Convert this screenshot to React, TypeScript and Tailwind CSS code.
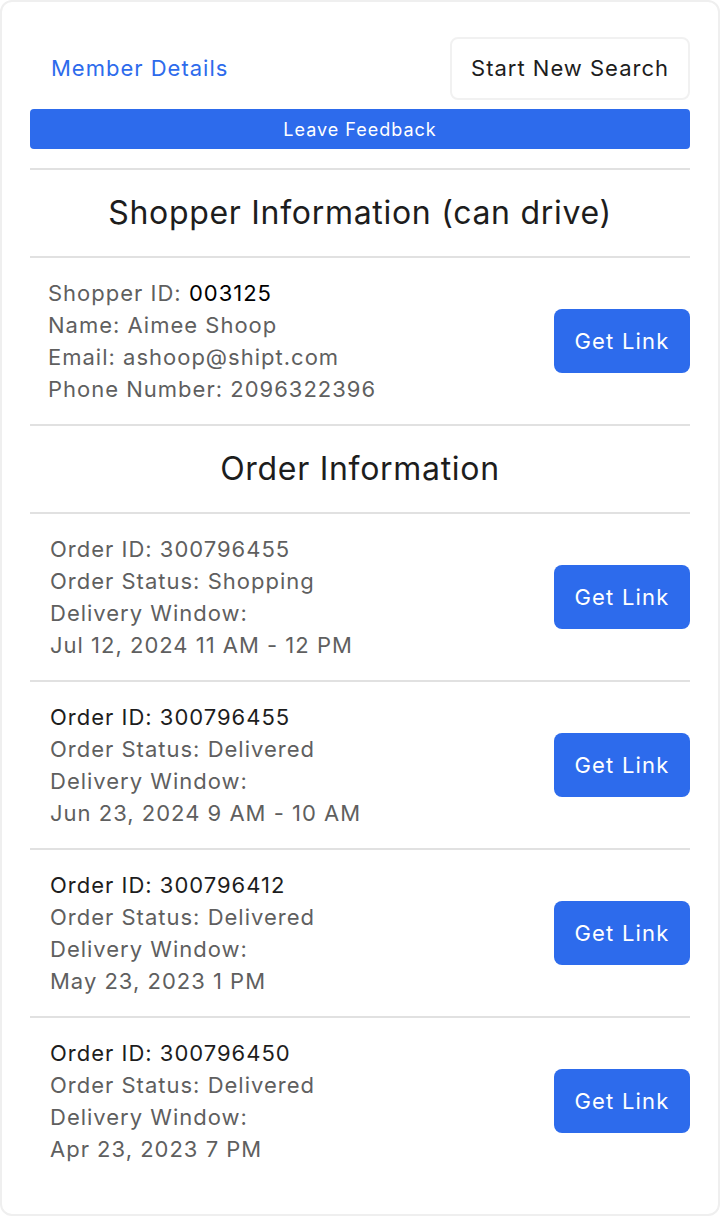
import React from 'react';

type Order = {
  id: string;
  status: string;
  window: string;
  active?: boolean;
};

const orders: Order[] = [
  { id: '300796455', status: 'Shopping', window: 'Jul 12, 2024 11 AM - 12 PM', active: true },
  { id: '300796455', status: 'Delivered', window: 'Jun 23, 2024 9 AM - 10 AM' },
  { id: '300796412', status: 'Delivered', window: 'May 23, 2023 1 PM' },
  { id: '300796450', status: 'Delivered', window: 'Apr 23, 2023 7 PM' },
];

const GetLink = () => (
  <button className="w-[136px] h-[64px] rounded-lg bg-[#2d6bec] text-white text-[22px] tracking-[1.2px] shrink-0">
    Get Link
  </button>
);

const Divider = () => <div className="h-[2px] bg-[#e1e1e1]" />;

const App: React.FC = () => {
  return (
    <div className="w-[720px] h-[1216px] bg-white font-['Inter',sans-serif] tracking-[1px]">
      <div className="h-full rounded-xl border-2 border-[#efefef] px-[28px] pt-[35px]">
        {/* Header */}
        <div className="flex justify-between items-center">
          <span className="ml-[21px] text-[22px] text-[#2d6bec]">Member Details</span>
          <button className="h-[63px] px-[19px] rounded-lg border-2 border-[#f1f1f1] text-[22px] text-[#1d1d1d]">
            Start New Search
          </button>
        </div>
        <button className="mt-[9px] w-full h-[40px] rounded bg-[#2d6bec] text-white text-[18px]">
          Leave Feedback
        </button>

        <div className="mt-[19px]">
          <Divider />
        </div>

        {/* Shopper */}
        <h2 className="h-[86px] flex items-center justify-center text-[32px] tracking-[0.7px] text-[#1d1d1d]">
          Shopper Information (can drive)
        </h2>
        <Divider />
        <div className="flex items-center justify-between py-[19px]">
          <div className="pl-[18px] text-[22px] leading-[32px] text-[#5f5f5f]">
            <div>
              Shopper ID: <span className="text-black">003125</span>
            </div>
            <div>Name: Aimee Shoop</div>
            <div>Email: ashoop@shipt.com</div>
            <div>Phone Number: 2096322396</div>
          </div>
          <GetLink />
        </div>
        <Divider />

        {/* Orders */}
        <h2 className="h-[86px] flex items-center justify-center text-[32px] tracking-[0.7px] text-[#1d1d1d]">
          Order Information
        </h2>
        {orders.map((o, i) => (
          <div key={i}>
            <Divider />
            <div className="flex items-center justify-between py-[19px]">
              <div className="pl-[20px] text-[22px] leading-[32px] text-[#5f5f5f]">
                <div className={o.active ? '' : 'text-[#1d1d1d]'}>Order ID: {o.id}</div>
                <div>Order Status: {o.status}</div>
                <div>Delivery Window:</div>
                <div>{o.window}</div>
              </div>
              <GetLink />
            </div>
          </div>
        ))}
      </div>
    </div>
  );
};

export default App;
